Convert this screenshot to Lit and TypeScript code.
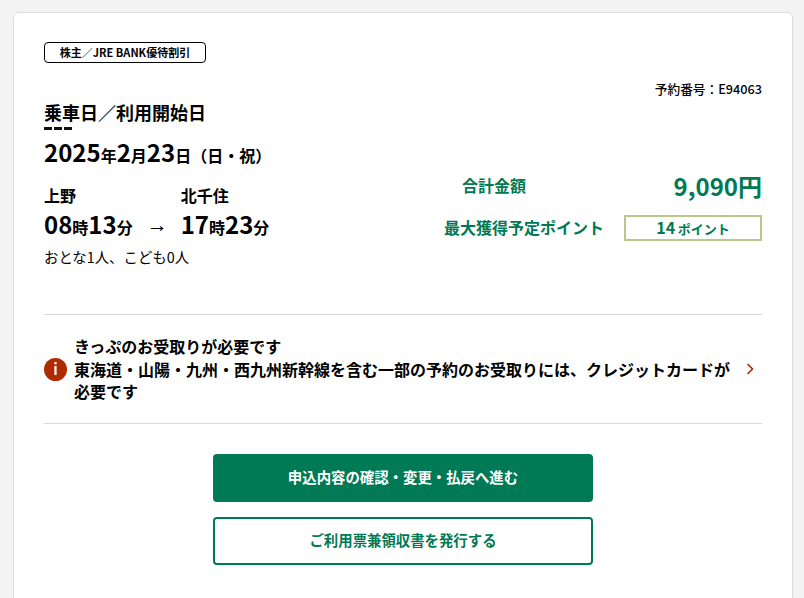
import { LitElement, html, css } from "lit";
import { customElement } from "lit/decorators.js";

@customElement("app-root")
export class AppRoot extends LitElement {
  static styles = css`
    :host {
      display: block;
      height: 598px;
      overflow: hidden;
      background: #f3f3f3;
      font-family: "Noto Sans CJK JP", "Noto Sans", sans-serif;
      color: #000;
    }
    * { box-sizing: border-box; }
    .page { padding: 12px 11px 0 13px; }
    .card {
      background: #fff;
      border: 1px solid #dcdcdc;
      border-radius: 6px;
      padding: 29px 30px 32px;
      height: 640px;
    }
    .badge {
      width: 162px;
      height: 21px;
      border: 1px solid #000;
      border-radius: 4px;
      font-size: 11px;
      font-weight: 700;
      line-height: 19px;
      text-align: center;
    }
    .ref {
      margin-top: 16px;
      height: 20px;
      text-align: right;
      font-size: 12.7px;
      font-weight: 500;
      line-height: 20px;
    }
    .summary {
      display: grid;
      grid-template-columns: 1fr 318px;
      height: 215px;
    }
    .heading { margin: 0; font-size: 18px; font-weight: 700; line-height: 26px; }
    .dash {
      width: 28px;
      height: 3px;
      margin-top: 2px;
      background: repeating-linear-gradient(100deg, #111 0 8px, transparent 8px 10px);
    }
    .date { margin-top: 6px; font-size: 16px; font-weight: 700; line-height: 32px; height: 32px; }
    .num { font-size: 24px; }
    .route { display: flex; margin-top: 16px; }
    .leg { display: flex; flex-direction: column; }
    .station { font-size: 16px; font-weight: 700; line-height: 22px; }
    .time { font-size: 16px; font-weight: 700; line-height: 34px; white-space: nowrap; margin-top: 1px; }
    .arrow {
      width: 48px;
      padding: 24px 0 0 14px;
      font-family: "Liberation Sans", sans-serif;
      font-size: 21px;
      line-height: 34px;
    }
    .people { margin-top: 2px; font-size: 14.4px; line-height: 22px; }
    .prices { display: flex; flex-direction: column; color: #007a54; font-weight: 700; padding-top: 69px; }
    .total { display: flex; justify-content: space-between; align-items: center; height: 36px; }
    .total-label { font-size: 16px; padding-left: 18px; line-height: 22px; margin-top: -3px; }
    .total-value { font-size: 24px; line-height: 36px; }
    .points { display: flex; justify-content: space-between; align-items: center; margin-top: 11px; }
    .points-label { font-size: 16px; line-height: 26px; margin-top: -2px; }
    .points-box {
      width: 138px;
      height: 26px;
      border: 2px solid #b9c88c;
      text-align: center;
      font-size: 16px;
      line-height: 20px;
      word-spacing: -1px;
    }
    .points-box span { font-size: 13px; }
    .notice {
      display: flex;
      align-items: center;
      height: 110px;
      border-top: 1px solid #d9d9d9;
      border-bottom: 1px solid #d9d9d9;
    }
    .info { flex: none; width: 23px; height: 23px; margin-right: 7px; }
    .msg { flex: 1; font-size: 16px; font-weight: 700; line-height: 22.5px; }
    .chev { flex: none; width: 8px; height: 12px; margin: 0 8px 0 15px; }
    .actions { display: flex; flex-direction: column; align-items: center; gap: 15px; margin-top: 30px; }
    .btn {
      width: 380px;
      height: 48px;
      border-radius: 4px;
      border: 2px solid #007a54;
      font: 700 14.4px/42px "Noto Sans CJK JP", sans-serif;
      text-align: center;
    }
    .primary { background: #007a54; color: #fff; }
    .secondary { background: #fff; color: #007a54; }
  `;

  render() {
    return html`
      <div class="page">
        <div class="card">
          <div class="badge">株主／JRE BANK優待割引</div>
          <div class="ref">予約番号：E94063</div>
          <div class="summary">
            <div>
              <h2 class="heading">乗車日／利用開始日</h2>
              <div class="dash"></div>
              <div class="date"><span class="num">2025</span>年<span class="num">2</span>月<span class="num">23</span>日（日・祝）</div>
              <div class="route">
                <div class="leg">
                  <span class="station">上野</span>
                  <span class="time"><span class="num">08</span>時<span class="num">13</span>分</span>
                </div>
                <div class="arrow">→</div>
                <div class="leg">
                  <span class="station">北千住</span>
                  <span class="time"><span class="num">17</span>時<span class="num">23</span>分</span>
                </div>
              </div>
              <div class="people">おとな1人、こども0人</div>
            </div>
            <div class="prices">
              <div class="total">
                <span class="total-label">合計金額</span>
                <span class="total-value">9,090円</span>
              </div>
              <div class="points">
                <span class="points-label">最大獲得予定ポイント</span>
                <div class="points-box">14 <span>ポイント</span></div>
              </div>
            </div>
          </div>
          <div class="notice">
            <svg class="info" viewBox="0 0 23 23" aria-hidden="true">
              <circle cx="11.5" cy="11.5" r="11.5" fill="#b02a00"></circle>
              <rect x="10.4" y="4" width="2.2" height="2.4" fill="#fff"></rect>
              <rect x="10.4" y="8" width="2.2" height="9" fill="#fff"></rect>
            </svg>
            <div class="msg">きっぷのお受取りが必要です<br />東海道・山陽・九州・西九州新幹線を含む一部の予約のお受取りには、クレジットカードが必要です</div>
            <svg class="chev" viewBox="0 0 8 12" aria-hidden="true">
              <path d="M1.5 1 L6.5 6 L1.5 11" fill="none" stroke="#b02a00" stroke-width="1.6"></path>
            </svg>
          </div>
          <div class="actions">
            <div class="btn primary">申込内容の確認・変更・払戻へ進む</div>
            <div class="btn secondary">ご利用票兼領収書を発行する</div>
          </div>
        </div>
      </div>
    `;
  }
}
